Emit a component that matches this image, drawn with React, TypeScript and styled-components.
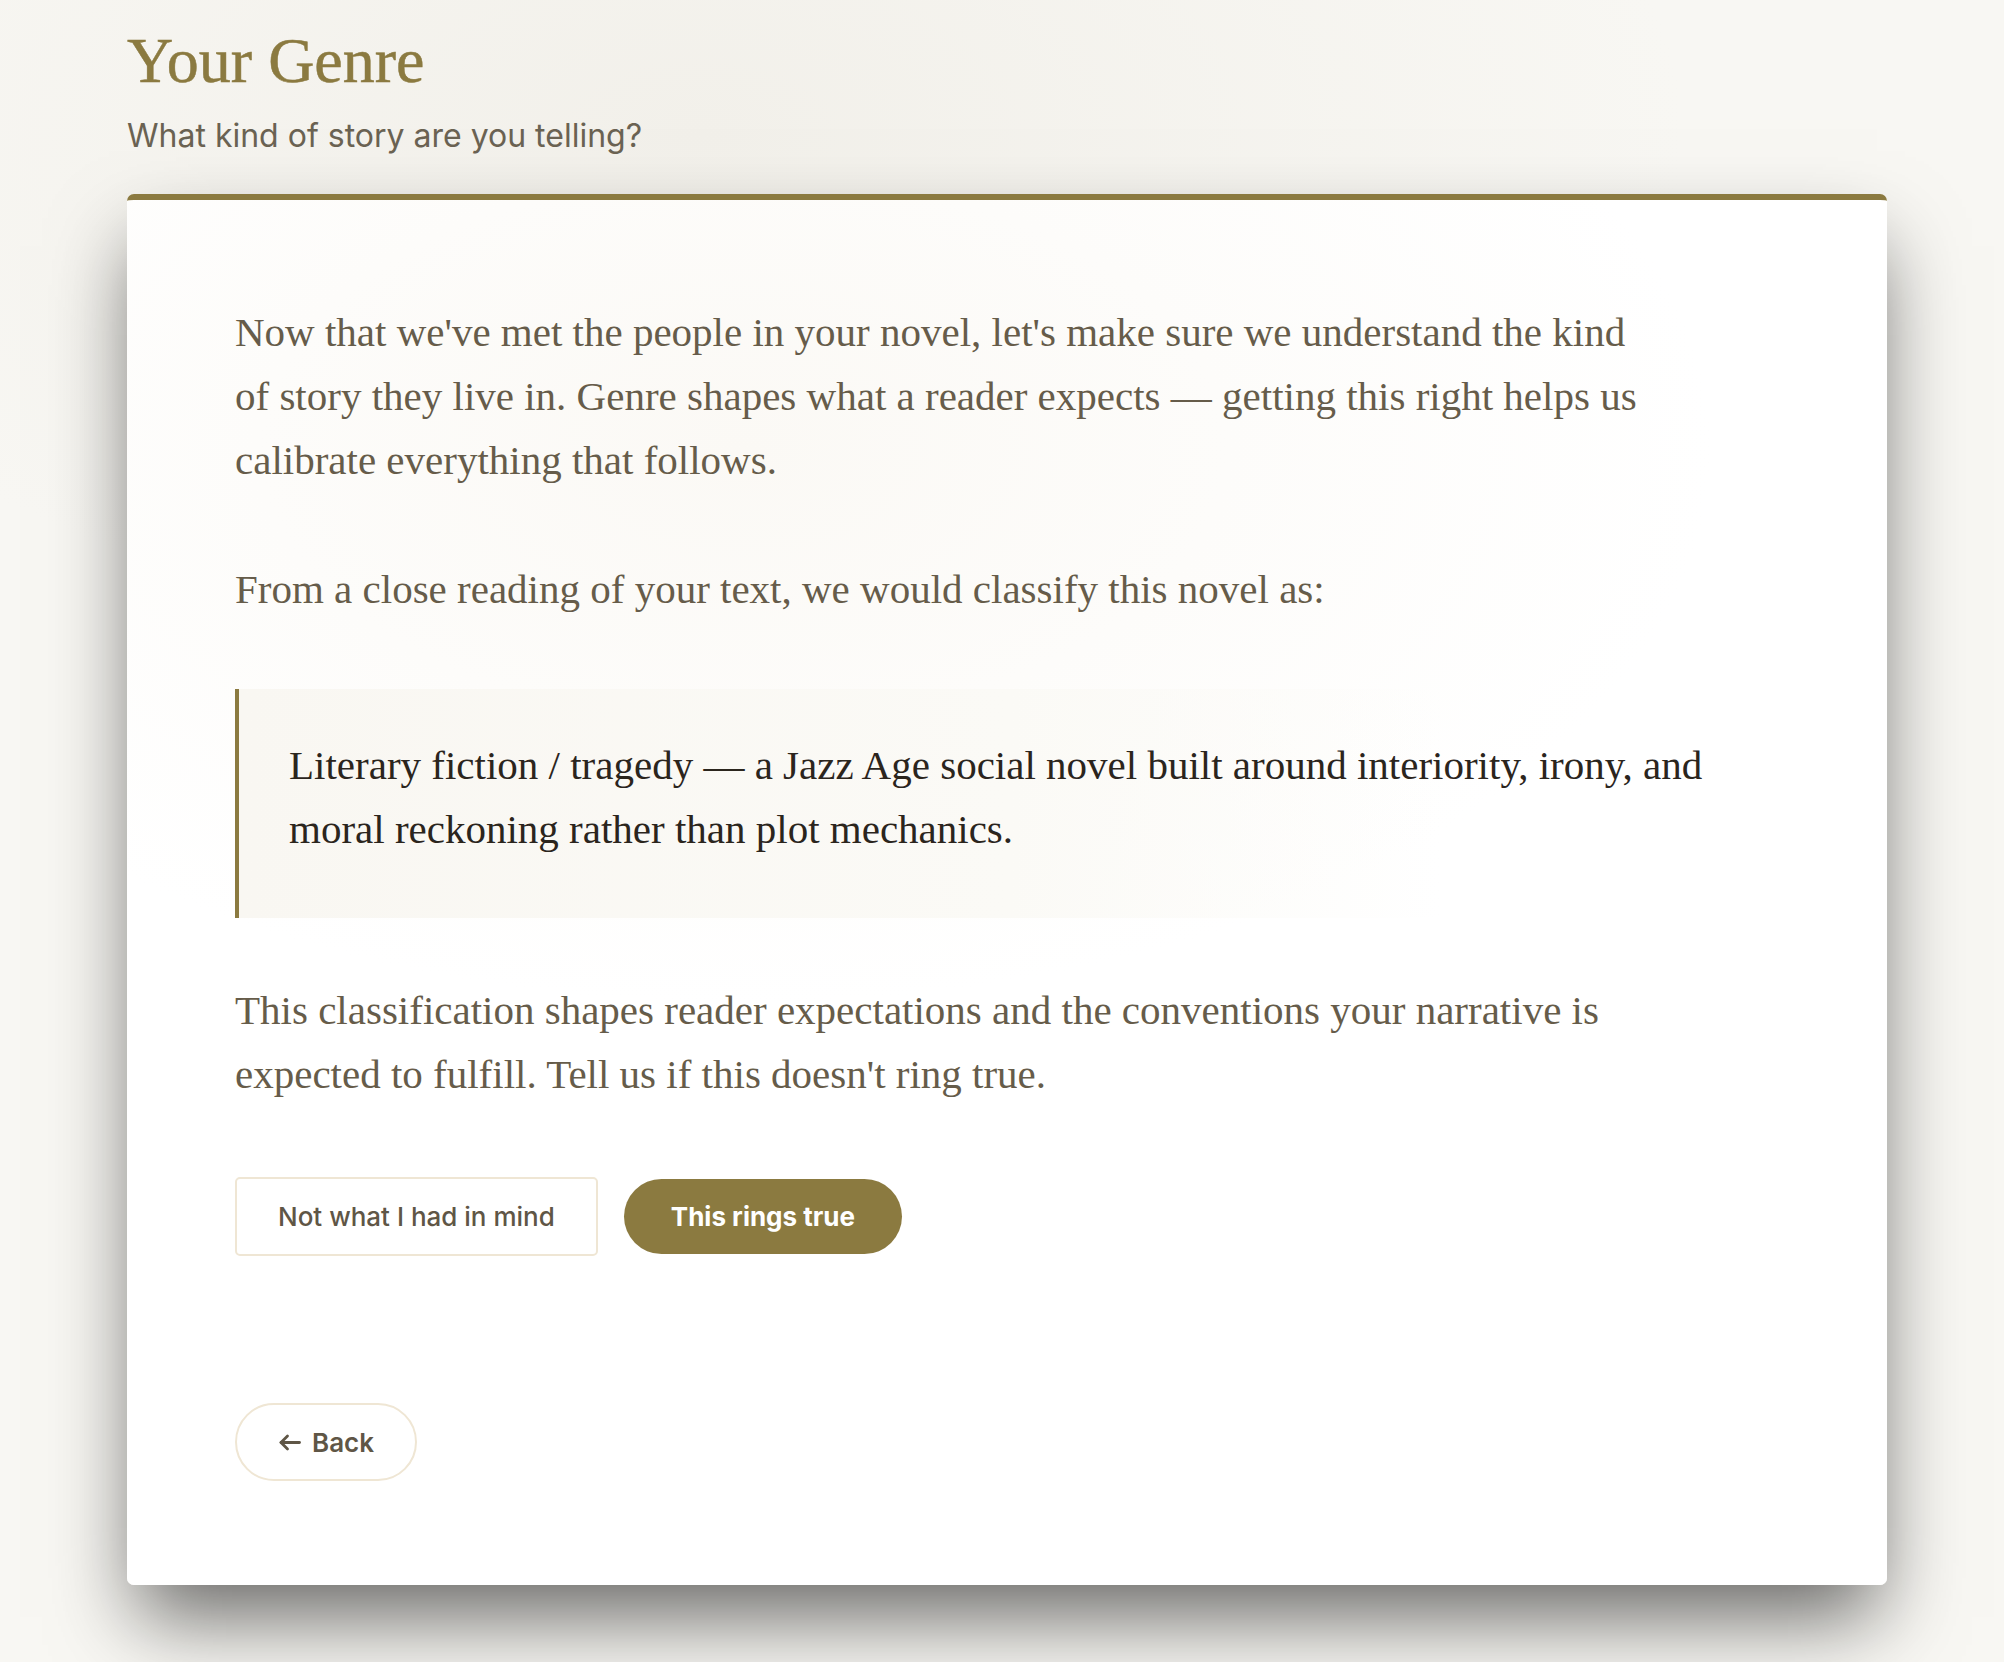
import React from 'react';
import styled, { createGlobalStyle } from 'styled-components';

const GOLD = '#8b7a40';
const INK = '#665c4a';
const LINE = '#efe6d4';

const GlobalStyle = createGlobalStyle`
  html, body {
    margin: 0;
    padding: 0;
    min-height: 100%;
    background: #f8f7f3;
  }
  * {
    box-sizing: border-box;
  }
`;

// page shell
const Page = styled.div`
  min-height: 1662px;
  padding: 24px 117px 70px 127px;
  background: radial-gradient(ellipse 70% 45% at 35% 8%, #f2f0ea 0%, #f8f7f3 70%);
`;

const Header = styled.header`
  margin-bottom: 37px;
`;

const Title = styled.h1`
  margin: 0;
  font-family: 'Liberation Serif', 'Times New Roman', serif;
  font-weight: 400;
  font-size: 64px;
  line-height: 74px;
  color: ${GOLD};
  -webkit-text-stroke: 0.5px ${GOLD};
`;

const Subtitle = styled.p`
  margin: 17px 0 0;
  font-family: Inter, 'Liberation Sans', sans-serif;
  font-size: 32px;
  line-height: 42px;
  color: #6a6252;
`;

const Card = styled.section`
  width: 1760px;
  border-top: 6px solid ${GOLD};
  border-radius: 7px;
  padding: 100px 108px 104px;
  background: radial-gradient(ellipse 55% 40% at 35% 18%, #fbf9f5 0%, #ffffff 100%);
  box-shadow: 0 42px 78px -10px rgba(0, 0, 0, 0.58);
`;

const Prose = styled.p<{ $gap?: number }>`
  max-width: 1430px;
  margin: 0 0 ${(p) => p.$gap ?? 65}px;
  font-family: 'Liberation Serif', 'Times New Roman', serif;
  font-size: 41px;
  line-height: 64px;
  color: ${INK};
`;

// highlighted genre verdict
const Verdict = styled.blockquote`
  margin: 0 0 60px;
  padding: 44px 50px 57px;
  border-left: 4px solid ${GOLD};
  background: linear-gradient(90deg, #f9f7f2 0%, #fbfaf6 50%, rgba(255, 255, 255, 0) 78%);
  font-family: 'Liberation Serif', 'Times New Roman', serif;
  font-size: 41px;
  line-height: 64px;
  color: #2b251d;
`;

const Actions = styled.div`
  display: flex;
  align-items: center;
  gap: 26px;
  margin-top: 71px;
`;

const Button = styled.button<{ $primary?: boolean }>`
  display: inline-flex;
  align-items: center;
  justify-content: center;
  gap: 11px;
  font-family: Inter, 'Liberation Sans', sans-serif;
  font-size: 26px;
  cursor: pointer;
  ${(p) =>
    p.$primary
      ? `
    height: 75px;
    padding: 0 47px;
    border: none;
    border-radius: 38px;
    background: ${GOLD};
    color: #ffffff;
    font-weight: 700;
  `
      : `
    height: 79px;
    padding: 0 41px;
    border: 2px solid ${LINE};
    border-radius: 5px;
    background: #ffffff;
    color: #5f5646;
    font-weight: 500;
  `}
`;

const BackButton = styled(Button)`
  height: 78px;
  padding: 0 41px 0 42px;
  border-radius: 39px;
  font-weight: 600;
`;

const Footer = styled.div`
  margin-top: 147px;
`;

const ArrowLeft = () => (
  <svg width="22" height="17" viewBox="0 0 22 17" fill="none" stroke="currentColor" strokeWidth="2.8" strokeLinecap="round" strokeLinejoin="round">
    <path d="M20.5 8.5H2" />
    <path d="M8.5 2 2 8.5 8.5 15" />
  </svg>
);

const App = () => {
  return (
    <Page>
      <GlobalStyle />
      <Header>
        <Title>Your Genre</Title>
        <Subtitle>What kind of story are you telling?</Subtitle>
      </Header>
      <Card>
        <Prose>
          Now that we've met the people in your novel, let's make sure we understand the kind of story they live in.
          Genre shapes what a reader expects — getting this right helps us calibrate everything that follows.
        </Prose>
        <Prose $gap={68}>From a close reading of your text, we would classify this novel as:</Prose>
        <Verdict>
          Literary fiction / tragedy — a Jazz Age social novel built around interiority, irony, and moral reckoning
          rather than plot mechanics.
        </Verdict>
        <Prose $gap={0}>
          This classification shapes reader expectations and the conventions your narrative is expected to fulfill.
          Tell us if this doesn't ring true.
        </Prose>
        <Actions>
          <Button>Not what I had in mind</Button>
          <Button $primary>This rings true</Button>
        </Actions>
        <Footer>
          <BackButton>
            <ArrowLeft />
            Back
          </BackButton>
        </Footer>
      </Card>
    </Page>
  );
};

export default App;
